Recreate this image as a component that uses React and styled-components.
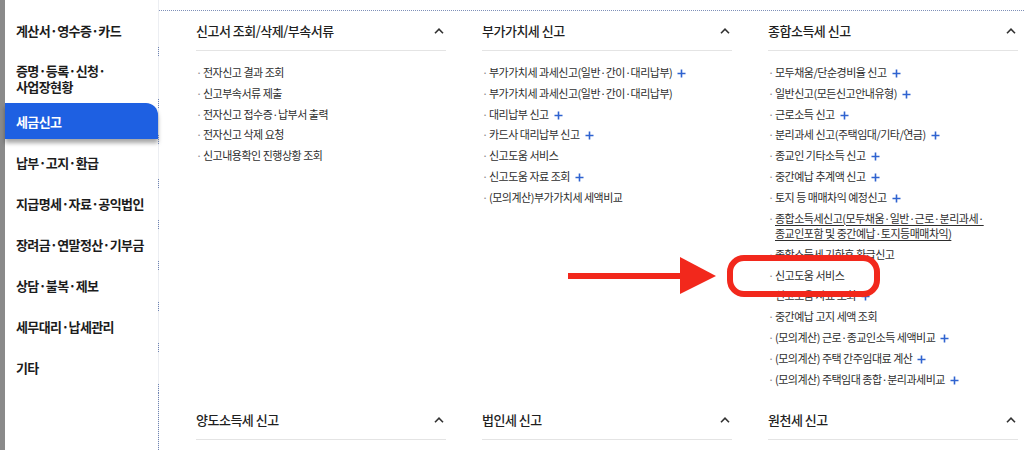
import React from "react";
import styled, { createGlobalStyle } from "styled-components";

const Global = createGlobalStyle`
  html, body { margin: 0; padding: 0; background: #fff; overflow: hidden; }
  * { box-sizing: border-box; }
`;

const Page = styled.div`
  position: relative;
  display: flex;
  width: 1024px;
  height: 450px;
  overflow: hidden;
  background: #fff;
  font-family: "Noto Sans CJK KR", "Noto Sans", sans-serif;
`;

const Edge = styled.div`
  width: 5px;
  flex-shrink: 0;
  background: #8a8a8a;
`;

const Sidebar = styled.nav`
  width: 154px;
  flex-shrink: 0;
  padding-top: 10px;
  display: flex;
  flex-direction: column;
  border-right: 1px solid #eceef2;
`;

const NavItem = styled.div`
  position: relative;
  padding: ${(p) => p.$pad || "12px 11px"};
  line-height: ${(p) => p.$lh || "17px"};
  font-size: 13px;
  font-weight: 700;
  letter-spacing: -0.6px;
  color: ${(p) => (p.$active ? "#fff" : "#1c1c1c")};
  background: ${(p) => (p.$active ? "#1e60e2" : "transparent")};
  border-top-right-radius: ${(p) => (p.$active ? "12px" : "0")};
  box-shadow: ${(p) => (p.$active ? "0 4px 4px rgba(0,0,0,0.35)" : "none")};
  margin-bottom: ${(p) => (p.$active ? "2.5px" : "0")};
  &::after {
    content: "";
    position: absolute;
    right: -1px;
    bottom: -5px;
    height: 9px;
    border-right: 1px dotted #6f84b3;
  }
`;

const NavLine = styled.span`
  display: block;
`;

const NavFill = styled.div`
  flex: 1;
  margin-top: 4px;
  border-right: 1px dotted #6f84b3;
  margin-right: -1px;
`;

const Main = styled.main`
  flex: 1;
  margin-top: 10px;
  border-top: 1px dotted #7f90b8;
  padding-left: 37px;
`;

const Grid = styled.div`
  display: grid;
  grid-template-columns: repeat(3, 250px);
  column-gap: 36px;
  row-gap: 8px;
  align-items: start;
`;

const Section = styled.section``;

const Head = styled.div`
  display: flex;
  align-items: center;
  justify-content: space-between;
  height: 40px;
  border-bottom: 1px solid #e4e4e4;
  font-size: 13px;
  font-weight: 500;
  letter-spacing: -0.5px;
  color: #1f1f1f;
`;

const Chevron = styled.svg`
  width: 10px;
  height: 6px;
  margin-right: 2px;
`;

const List = styled.ul`
  list-style: none;
  margin: 0;
  padding: 14px 0 0;
`;

const Item = styled.li`
  display: flex;
  font-size: 11px;
  line-height: 15.5px;
  margin-bottom: 5.3px;
  letter-spacing: -0.5px;
  color: #2e2e2e;
`;

const Bullet = styled.span`
  width: 7px;
  flex-shrink: 0;
  color: #8a8a8a;
`;

const Label = styled.span`
  text-decoration: ${(p) => (p.$underline ? "underline" : "none")};
  text-underline-offset: 2px;
  word-break: keep-all;
`;

const Plus = styled.svg`
  width: 9px;
  height: 9px;
  margin-left: 5px;
  vertical-align: -1px;
`;

const Arrow = styled.svg`
  position: absolute;
  left: 566px;
  top: 255px;
  width: 152px;
  height: 42px;
`;

const Highlight = styled.div`
  position: absolute;
  left: 727px;
  top: 255px;
  width: 153px;
  height: 42px;
  border: 6px solid #f2281c;
  border-radius: 17px;
`;

const PlusIcon = () => (
  <Plus viewBox="0 0 9 9">
    <path d="M4.5 0.5v8M0.5 4.5h8" stroke="#2f63d0" strokeWidth="1.6" />
  </Plus>
);

const ChevronIcon = () => (
  <Chevron viewBox="0 0 10 6">
    <polyline points="1,5.2 5,1.2 9,5.2" fill="none" stroke="#333" strokeWidth="1.6" />
  </Chevron>
);

const sections = [
  {
    title: "신고서 조회/삭제/부속서류",
    items: [
      ["전자신고 결과 조회"],
      ["신고부속서류 제출"],
      ["전자신고 접수증·납부서 출력"],
      ["전자신고 삭제 요청"],
      ["신고내용확인 진행상황 조회"],
    ],
  },
  {
    title: "부가가치세 신고",
    items: [
      ["부가가치세 과세신고(일반·간이·대리납부)", true],
      ["부가가치세 과세신고(일반·간이·대리납부)"],
      ["대리납부 신고", true],
      ["카드사 대리납부 신고", true],
      ["신고도움 서비스"],
      ["신고도움 자료 조회", true],
      ["(모의계산)부가가치세 세액비교"],
    ],
  },
  {
    title: "종합소득세 신고",
    items: [
      ["모두채움/단순경비율 신고", true],
      ["일반신고(모든신고안내유형)", true],
      ["근로소득 신고", true],
      ["분리과세 신고(주택임대/기타/연금)", true],
      ["종교인 기타소득 신고", true],
      ["중간예납 추계액 신고", true],
      ["토지 등 매매차익 예정신고", true],
      [
        <>
          종합소득세신고(모두채움·일반·근로·분리과세·
          <br />
          종교인포함 및 중간예납·토지등매매차익)
        </>,
        false,
        true,
      ],
      ["종합소득세 기한후 환급신고"],
      ["신고도움 서비스"],
      ["신고도움 자료 조회", true],
      ["중간예납 고지 세액 조회"],
      ["(모의계산) 근로·종교인소득 세액비교", true],
      ["(모의계산) 주택 간주임대료 계산", true],
      ["(모의계산) 주택임대 종합·분리과세비교", true],
    ],
  },
  { title: "양도소득세 신고", items: [] },
  { title: "법인세 신고", items: [] },
  { title: "원천세 신고", items: [] },
];

export default function App() {
  return (
    <Page>
      <Global />
      <Edge />
      <Sidebar>
        <NavItem>계산서·영수증·카드</NavItem>
        <NavItem $pad="12px 11px 8px" $lh="16px">
          <NavLine>증명·등록·신청·</NavLine>
          <NavLine>사업장현황</NavLine>
        </NavItem>
        <NavItem $active $pad="9.5px 11px">세금신고</NavItem>
        <NavItem>납부·고지·환급</NavItem>
        <NavItem>지급명세·자료·공익법인</NavItem>
        <NavItem>장려금·연말정산·기부금</NavItem>
        <NavItem>상담·불복·제보</NavItem>
        <NavItem>세무대리·납세관리</NavItem>
        <NavItem>기타</NavItem>
        <NavFill />
      </Sidebar>
      <Main>
        <Grid>
          {sections.map((s) => (
            <Section key={s.title}>
              <Head>
                <span>{s.title}</span>
                <ChevronIcon />
              </Head>
              {s.items.length > 0 && (
                <List>
                  {s.items.map(([text, plus, underline], i) => (
                    <Item key={i}>
                      <Bullet>·</Bullet>
                      <Label $underline={underline}>
                        {text}
                        {plus && <PlusIcon />}
                      </Label>
                    </Item>
                  ))}
                </List>
              )}
            </Section>
          ))}
        </Grid>
      </Main>
      <Arrow viewBox="0 0 152 42">
        <line x1="2" y1="21" x2="118" y2="21" stroke="#f2281c" strokeWidth="6" />
        <polygon points="114,2 150,21 114,39" fill="#f2281c" />
      </Arrow>
      <Highlight />
    </Page>
  );
}
